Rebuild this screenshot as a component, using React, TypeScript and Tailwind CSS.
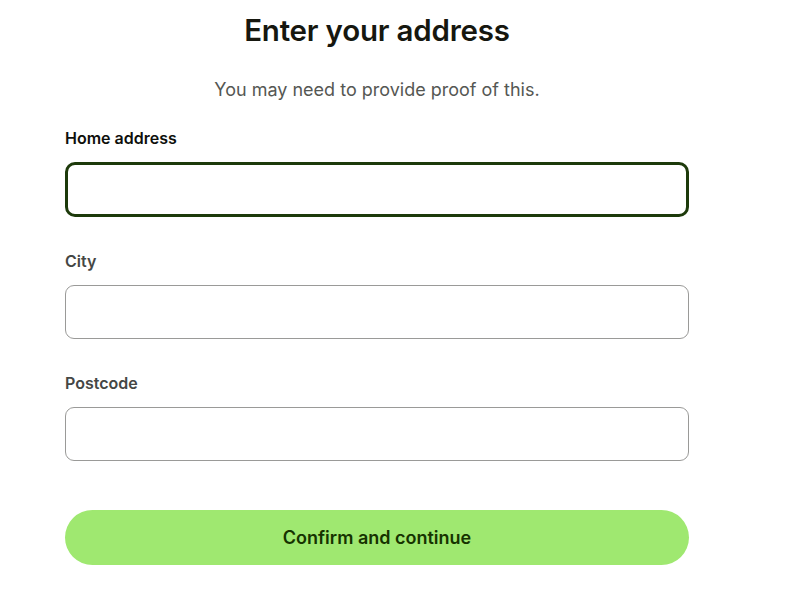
export default function App() {
    const fields = [
        { id: 'address', label: 'Home address', active: true },
        { id: 'city', label: 'City', active: false },
        { id: 'postcode', label: 'Postcode', active: false },
    ];

    return (
        <div className="min-h-screen bg-white font-['Inter',sans-serif]">
            <div className="ml-[65px] w-[624px] pt-[12px]">
                <h1 className="text-center text-[29.5px] leading-[36px] font-semibold text-[#16170f] tracking-[-0.2px]">
                    Enter your address
                </h1>
                <p className="mt-[30px] text-center text-[18px] leading-[24px] text-[#555753]">
                    You may need to provide proof of this.
                </p>

                <form className="mt-[25px]" onSubmit={(e) => e.preventDefault()}>
                    {fields.map((field, i) => (
                        <div key={field.id} className={i > 0 ? 'mt-[33px]' : ''}>
                            <label
                                htmlFor={field.id}
                                className={`block text-[16px] leading-[22px] font-semibold ${
                                    field.active ? 'text-[#0e0f0c]' : 'text-[#454745]'
                                }`}
                            >
                                {field.label}
                            </label>
                            <input
                                id={field.id}
                                type="text"
                                className={`mt-[13px] block w-full bg-white outline-none px-4 text-base ${
                                    field.active
                                        ? 'h-[55px] border-[3px] border-[#1d3a0b] rounded-[10px]'
                                        : 'h-[54px] border border-[#9a9a98] rounded-[9px]'
                                }`}
                            />
                        </div>
                    ))}

                    <button
                        type="submit"
                        className="mt-[49px] w-full h-[55px] rounded-full bg-[#9fe870] text-[18px] font-semibold text-[#163300]"
                    >
                        Confirm and continue
                    </button>
                </form>
            </div>
        </div>
    );
}
